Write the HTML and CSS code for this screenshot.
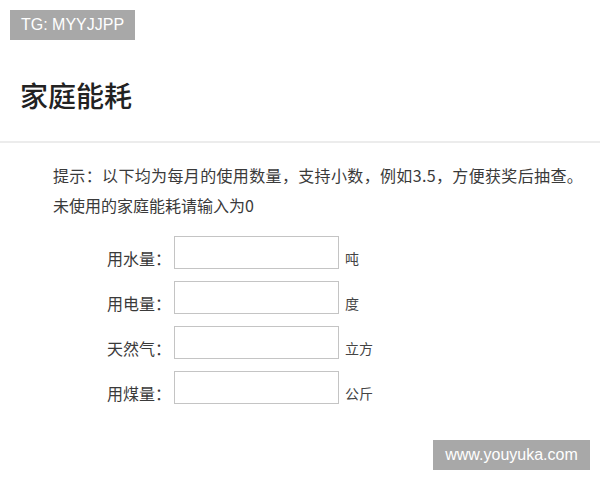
FILE: index.html
```html
<!DOCTYPE html>
<html lang="zh-CN">
<head>
<meta charset="utf-8">
<title>家庭能耗</title>
<link rel="stylesheet" href="styles.css">
</head>
<body>
<div class="page">
  <header class="header">
    <h1 class="title">家庭能耗</h1>
  </header>
  <section class="hint">
    <p>提示：以下均为每月的使用数量，支持小数，例如3.5，方便获奖后抽查。</p>
    <p>未使用的家庭能耗请输入为0</p>
  </section>
  <form class="form">
    <label class="label" for="water">用水量：</label>
    <input class="field" id="water" type="text">
    <span class="unit">吨</span>
    <label class="label" for="power">用电量：</label>
    <input class="field" id="power" type="text">
    <span class="unit">度</span>
    <label class="label" for="gas">天然气：</label>
    <input class="field" id="gas" type="text">
    <span class="unit">立方</span>
    <label class="label" for="coal">用煤量：</label>
    <input class="field" id="coal" type="text">
    <span class="unit">公斤</span>
  </form>
  <div class="badge badge-top">TG: MYYJJPP</div>
  <div class="badge badge-bottom">www.youyuka.com</div>
</div>
</body>
</html>
```
FILE: styles.css
```css
* { box-sizing: border-box; }
html, body {
  margin: 0;
  padding: 0;
  background: #fff;
}
body {
  width: 600px;
  height: 480px;
  overflow: hidden;
  font-family: "Noto Sans CJK SC", "Noto Sans", sans-serif;
  color: #333;
}
.page {
  position: relative;
  width: 600px;
  height: 480px;
}
.header {
  height: 143px;
  padding: 75px 0 0 20px;
  border-bottom: 2px solid #ececec;
}
.title {
  margin: 0;
  font-size: 28px;
  line-height: 40px;
  font-weight: 500;
  color: #222;
}
.hint {
  padding: 17px 0 0 53px;
}
.hint p {
  margin: 0;
  font-size: 16px;
  line-height: 30px;
  color: #3a3a3a;
}
.hint p:first-child {
  letter-spacing: 0.35px;
}
.form {
  display: grid;
  grid-template-columns: 171px 165px auto;
  column-gap: 3px;
  row-gap: 12px;
  align-items: end;
  margin-top: 16px;
}
.label {
  text-align: right;
  font-size: 16px;
  line-height: 22px;
  color: #3a3a3a;
}
.field {
  margin: 0;
  width: 165px;
  height: 33px;
  border: 1px solid #c4c4c4;
  background: #fff;
  padding: 0 6px;
  font: inherit;
  outline: none;
}
.unit {
  padding-left: 3px;
  font-size: 14px;
  line-height: 22px;
  color: #444;
}
.badge {
  position: absolute;
  background: #a8a8a8;
  color: #fff;
  font-family: "Liberation Sans", Arial, sans-serif;
  font-size: 16px;
  height: 30px;
  line-height: 30px;
  text-align: center;
}
.badge-top {
  left: 10px;
  top: 10px;
  width: 125px;
}
.badge-bottom {
  left: 433px;
  top: 440px;
  width: 157px;
}
```
